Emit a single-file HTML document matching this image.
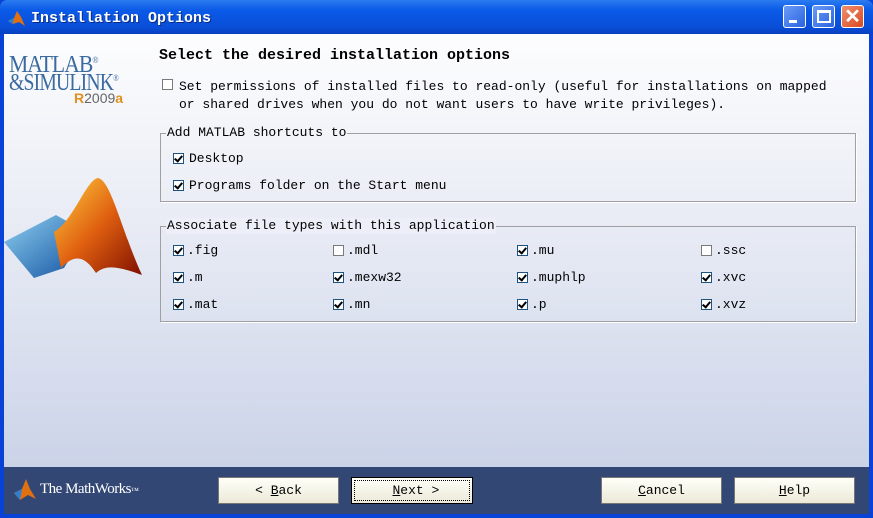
<!DOCTYPE html>
<html><head><style>
*{margin:0;padding:0;box-sizing:border-box}
body{width:873px;height:518px;overflow:hidden;font-family:"Liberation Mono",monospace;font-size:13px;color:#000;position:relative;background:#0842d6}
.tb{position:absolute;left:0;top:0;width:873px;height:34px;background:linear-gradient(#2b7bf0,#0a5ae8 30%,#0a4ed8 80%,#0840c0);border-radius:7px 7px 0 0}
.tt{position:absolute;left:31px;top:10px;color:#fff;font-weight:bold;font-size:15px;text-shadow:1px 1px #0a2a80}
.btn{position:absolute;top:5px;width:23px;height:23px;border:1px solid #fff;border-radius:3px;background:linear-gradient(135deg,#6a9cf8,#2a63e0)}
.client{position:absolute;left:4px;top:34px;width:865px;height:480px;background:linear-gradient(#fdfdfe,#f0f2f8 25%,#dde2f0 60%,#cbd3e8 90%)}
.foot{position:absolute;left:4px;top:467px;width:865px;height:47px;background:#334775}
.t{position:absolute;white-space:pre}
.cb{position:absolute;width:11px;height:11px;border:1px solid #1c5180;background:#fff}
.cb.u{border-color:#7a7a7a}
.cb.c::after{content:"";position:absolute;left:2px;top:0px;width:3px;height:6px;border:solid #000;border-width:0 2px 2px 0;transform:rotate(40deg)}
.grp{position:absolute;border:1px solid #a0a0a0;box-shadow:1px 1px 0 #fff}
.lg{position:absolute;padding:0 1px;top:-9px;left:5px;line-height:16px}
.pb{position:absolute;top:477px;height:27px;background:linear-gradient(#fffff8,#ece9d8);border:1px solid #777;text-align:center;line-height:25px;font-size:13px}
.lt{position:absolute;white-space:pre;font:24px/24px 'Liberation Serif',serif;color:#3a6aa0;letter-spacing:-1px;transform-origin:left}
</style></head><body>
<div class="tb"></div>
<svg style="position:absolute;left:8px;top:9px" width="18" height="18" viewBox="0 0 18 18"><polygon points="0,12 6,9 9,2 13,8 17,17 11,13 5,15" fill="#e07010"/><polygon points="0,12 6,9 5,15" fill="#3080d0"/></svg>
<div class="tt">Installation Options</div>
<div class="btn" style="left:783px"><div style="position:absolute;left:5px;top:14px;width:8px;height:3px;background:#fff"></div></div>
<div class="btn" style="left:812px"><div style="position:absolute;left:4px;top:4px;width:14px;height:13px;border:2px solid #fff;border-top-width:3px"></div></div>
<div class="btn" style="left:841px;background:linear-gradient(135deg,#f09070,#d84a20);color:#fff;font:bold 20px 'Liberation Sans',sans-serif;text-align:center;line-height:22px">✕</div>
<div class="client"></div>
<div class="lt" style="left:9px;top:48px;transform:scaleX(.9)">MATLAB<sup style="font-size:9px">®</sup></div>
<div class="lt" style="left:9px;top:66px;transform:scaleX(.82)">&amp;SIMULINK<sup style="font-size:9px">®</sup></div>
<div class="t" style="left:74px;top:90px;font:14px 'Liberation Sans',sans-serif;color:#666"><b style="color:#e09020">R</b>2009<b style="color:#e09020">a</b></div>
<svg style="position:absolute;left:4px;top:170px" width="150" height="125" viewBox="0 0 150 125">
<defs><linearGradient id="g" x1="0" y1="0" x2="1" y2="1"><stop offset="0" stop-color="#ffd040"/><stop offset=".5" stop-color="#e06010"/><stop offset="1" stop-color="#801000"/></linearGradient>
<linearGradient id="b" x1="0" y1="0" x2="1" y2="1"><stop offset="0" stop-color="#8fd0f0"/><stop offset="1" stop-color="#1050a0"/></linearGradient></defs>
<polygon points="0,72 52,45 82,62 60,98 30,108" fill="url(#b)"/>
<path d="M50,62 C70,50 82,10 94,8 C107,10 118,62 138,105 C118,98 103,93 92,103 C82,88 72,82 57,98 Z" fill="url(#g)"/>
</svg>
<div class="t" style="left:159px;top:47px;font-weight:bold;font-size:15px">Select the desired installation options</div>
<div class="cb u" style="left:162px;top:79px;background:#fff"></div>
<div class="t" style="left:179px;top:78px;line-height:18px">Set permissions of installed files to read-only (useful for installations on mapped
or shared drives when you do not want users to have write privileges).</div>
<div class="grp" style="left:160px;top:133px;width:696px;height:69px"><div class="lg" style="background:#f3f4f9">Add MATLAB shortcuts to</div></div>
<div class="cb c" style="left:173px;top:153px"></div><div class="t" style="left:189px;top:151px">Desktop</div>
<div class="cb c" style="left:173px;top:180px"></div><div class="t" style="left:189px;top:178px">Programs folder on the Start menu</div>
<div class="grp" style="left:160px;top:226px;width:696px;height:96px"><div class="lg" style="background:#eceff7">Associate file types with this application</div></div>
<div class="cb c" style="left:173px;top:245px"></div><div class="t" style="left:187px;top:243px">.fig</div>
<div class="cb u" style="left:333px;top:245px"></div><div class="t" style="left:347px;top:243px">.mdl</div>
<div class="cb c" style="left:517px;top:245px"></div><div class="t" style="left:531px;top:243px">.mu</div>
<div class="cb u" style="left:701px;top:245px"></div><div class="t" style="left:715px;top:243px">.ssc</div>
<div class="cb c" style="left:173px;top:272px"></div><div class="t" style="left:187px;top:270px">.m</div>
<div class="cb c" style="left:333px;top:272px"></div><div class="t" style="left:347px;top:270px">.mexw32</div>
<div class="cb c" style="left:517px;top:272px"></div><div class="t" style="left:531px;top:270px">.muphlp</div>
<div class="cb c" style="left:701px;top:272px"></div><div class="t" style="left:715px;top:270px">.xvc</div>
<div class="cb c" style="left:173px;top:299px"></div><div class="t" style="left:187px;top:297px">.mat</div>
<div class="cb c" style="left:333px;top:299px"></div><div class="t" style="left:347px;top:297px">.mn</div>
<div class="cb c" style="left:517px;top:299px"></div><div class="t" style="left:531px;top:297px">.p</div>
<div class="cb c" style="left:701px;top:299px"></div><div class="t" style="left:715px;top:297px">.xvz</div>
<div class="foot"></div>
<svg style="position:absolute;left:14px;top:479px" width="24" height="22" viewBox="0 0 24 22"><polygon points="0,14 8,10 12,0 16,10 22,20 14,16 6,21" fill="#e07010"/><polygon points="0,14 8,10 6,21" fill="#3080d0"/></svg>
<div class="t" style="left:40px;top:481px;font:15px 'Liberation Serif',serif;color:#fff;letter-spacing:-.5px">The MathWorks<span style="font-size:8px">™</span></div>
<div class="pb" style="left:218px;width:121px">&lt; <u>B</u>ack</div>
<div class="pb" style="left:351px;width:122px;border:1px solid #000;outline:1px dotted #000;outline-offset:-4px">&nbsp;<u>N</u>ext &gt;</div>
<div class="pb" style="left:601px;width:121px"><u>C</u>ancel</div>
<div class="pb" style="left:734px;width:121px"><u>H</u>elp</div>
</body></html>
